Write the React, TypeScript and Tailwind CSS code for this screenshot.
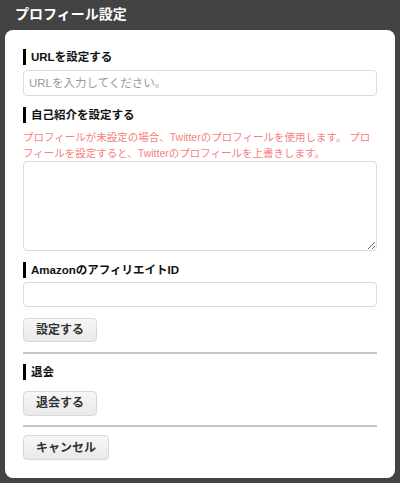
const font = { fontFamily: '"Liberation Sans", "Noto Sans CJK JP", sans-serif' };

function Heading({ children, className = "" }: { children: React.ReactNode; className?: string }) {
  return (
    <div className={`flex h-[16px] items-center border-l-[3px] border-black pl-[5px] text-[11.5px] font-bold leading-[16px] text-[#111] ${className}`}>
      {children}
    </div>
  );
}

function GrayButton({ children, className = "" }: { children: React.ReactNode; className?: string }) {
  return (
    <button
      type="button"
      className={`rounded-[4px] border border-[#d8d8d8] bg-gradient-to-b from-[#f7f7f7] to-[#e9e9e9] px-[12px] text-[12px] font-bold text-[#333] ${className}`}
    >
      {children}
    </button>
  );
}

export default function App() {
  return (
    <div style={font} className="flex h-[483px] w-[400px] flex-col bg-[#434343] px-[5px]">
      <div className="flex h-[30px] items-center pl-[10px] pb-[2px] text-[14px] font-bold text-white">
        プロフィール設定
      </div>

      <div className="flex h-[448px] flex-col rounded-[8px] bg-white px-[18px] pt-[19px]">
        <Heading>URLを設定する</Heading>
        <input
          className="mt-[5px] h-[26px] w-full rounded-[4px] border border-[#dcdcdc] px-[5px] text-[11.5px] outline-none placeholder:text-[#9a9a9a]"
          placeholder="URLを入力してください。"
        />

        <Heading className="mt-[11px]">自己紹介を設定する</Heading>
        <p className="mt-[6px] text-[10.5px] leading-[16px] text-[#f78080]">
          プロフィールが未設定の場合、Twitterのプロフィールを使用します。 プロフィールを設定すると、Twitterのプロフィールを上書きします。
        </p>
        <textarea className="block h-[90px] w-full rounded-[4px] border border-[#dcdcdc] text-[12px] outline-none" />

        <Heading className="mt-[11px]">AmazonのアフィリエイトID</Heading>
        <input className="mt-[4px] h-[25px] w-full rounded-[4px] border border-[#dcdcdc] px-[5px] text-[12px] outline-none" />

        <div className="mt-[10px]">
          <GrayButton className="h-[24px]">設定する</GrayButton>
        </div>

        <div className="mt-[10px] h-[2px] bg-[#c6c6c6]" />

        <Heading className="mt-[10px]">退会</Heading>
        <div className="mt-[10px]">
          <GrayButton className="h-[25px]">退会する</GrayButton>
        </div>

        <div className="mt-[9px] h-[2px] bg-[#c6c6c6]" />

        <div className="mt-[8px]">
          <GrayButton className="h-[25px]">キャンセル</GrayButton>
        </div>
      </div>
    </div>
  );
}
